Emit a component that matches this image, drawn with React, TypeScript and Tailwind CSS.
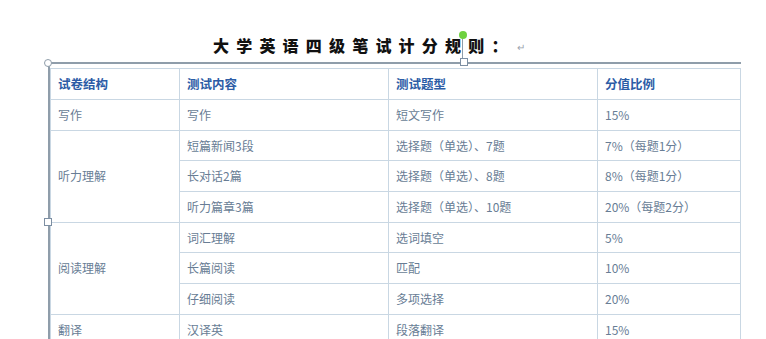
const cell = 'border border-[#c9d7e3] pl-[7px] align-middle';
const body = 'text-[#687d95]';

type Row = { a?: string; span?: number; b: string; c: string; d: string };

const rows: Row[] = [
  { a: '写作', span: 1, b: '写作', c: '短文写作', d: '15%' },
  { a: '听力理解', span: 3, b: '短篇新闻3段', c: '选择题（单选）、7题', d: '7%（每题1分）' },
  { b: '长对话2篇', c: '选择题（单选）、8题', d: '8%（每题1分）' },
  { b: '听力篇章3篇', c: '选择题（单选）、10题', d: '20%（每题2分）' },
  { a: '阅读理解', span: 3, b: '词汇理解', c: '选词填空', d: '5%' },
  { b: '长篇阅读', c: '匹配', d: '10%' },
  { b: '仔细阅读', c: '多项选择', d: '20%' },
  { a: '翻译', span: 1, b: '汉译英', c: '段落翻译', d: '15%' },
];

export default function App() {
  return (
    <div
      className="relative w-[766px] h-[339px] overflow-hidden bg-white"
      style={{ fontFamily: '"Noto Sans CJK SC", "Liberation Sans", sans-serif' }}
    >
      {/* title */}
      <div className="pt-[37px] pl-[213px] flex items-center h-[53px]">
        <span className="text-[16px] leading-[16px] font-black text-[#111] tracking-[7.2px]">
          大学英语四级笔试计分规则：
        </span>
        <span className="text-[10px] leading-[10px] text-[#9aa3ad] ml-[2px] mt-[4px]">↵</span>
      </div>

      {/* table with selection frame */}
      <div className="relative mt-[9px] ml-[48px] w-[693px] border-t-2 border-l-2 border-[#8f9daa] pt-[4px] h-[300px]">
        <table className="border-collapse table-fixed w-[690px] text-[12px] leading-none">
          <colgroup>
            <col className="w-[129px]" />
            <col className="w-[209px]" />
            <col className="w-[209px]" />
            <col className="w-[143px]" />
          </colgroup>
          <thead>
            <tr className="h-[31px] font-bold text-[#2c5ca6] text-[12.5px]">
              <td className={cell}>试卷结构</td>
              <td className={cell}>测试内容</td>
              <td className={cell}>测试题型</td>
              <td className={cell}>分值比例</td>
            </tr>
          </thead>
          <tbody className={body}>
            {rows.map((r, i) => (
              <tr key={i} className="h-[30.7px]">
                {r.a && (
                  <td className={cell} rowSpan={r.span}>
                    {r.a}
                  </td>
                )}
                <td className={cell}>{r.b}</td>
                <td className={cell}>{r.c}</td>
                <td className={cell}>{r.d}</td>
              </tr>
            ))}
          </tbody>
        </table>

        {/* handles */}
        <div className="absolute -left-[6px] -top-[5px] w-[8px] h-[8px] rounded-full border border-[#8f9daa] bg-white" />
        <div className="absolute left-[410px] -top-[6px] w-[8px] h-[8px] border border-[#7d8fa3] bg-white" />
        <div className="absolute -left-[6px] top-[154px] w-[8px] h-[8px] border border-[#7d8fa3] bg-white" />
      </div>

      {/* rotate handle */}
      <div className="absolute left-[462px] top-[36px] w-px h-[22px] bg-[#8f9daa]" />
      <div className="absolute left-[459px] top-[31px] w-[8px] h-[8px] rounded-full bg-[#6fd13f]" />
    </div>
  );
}
